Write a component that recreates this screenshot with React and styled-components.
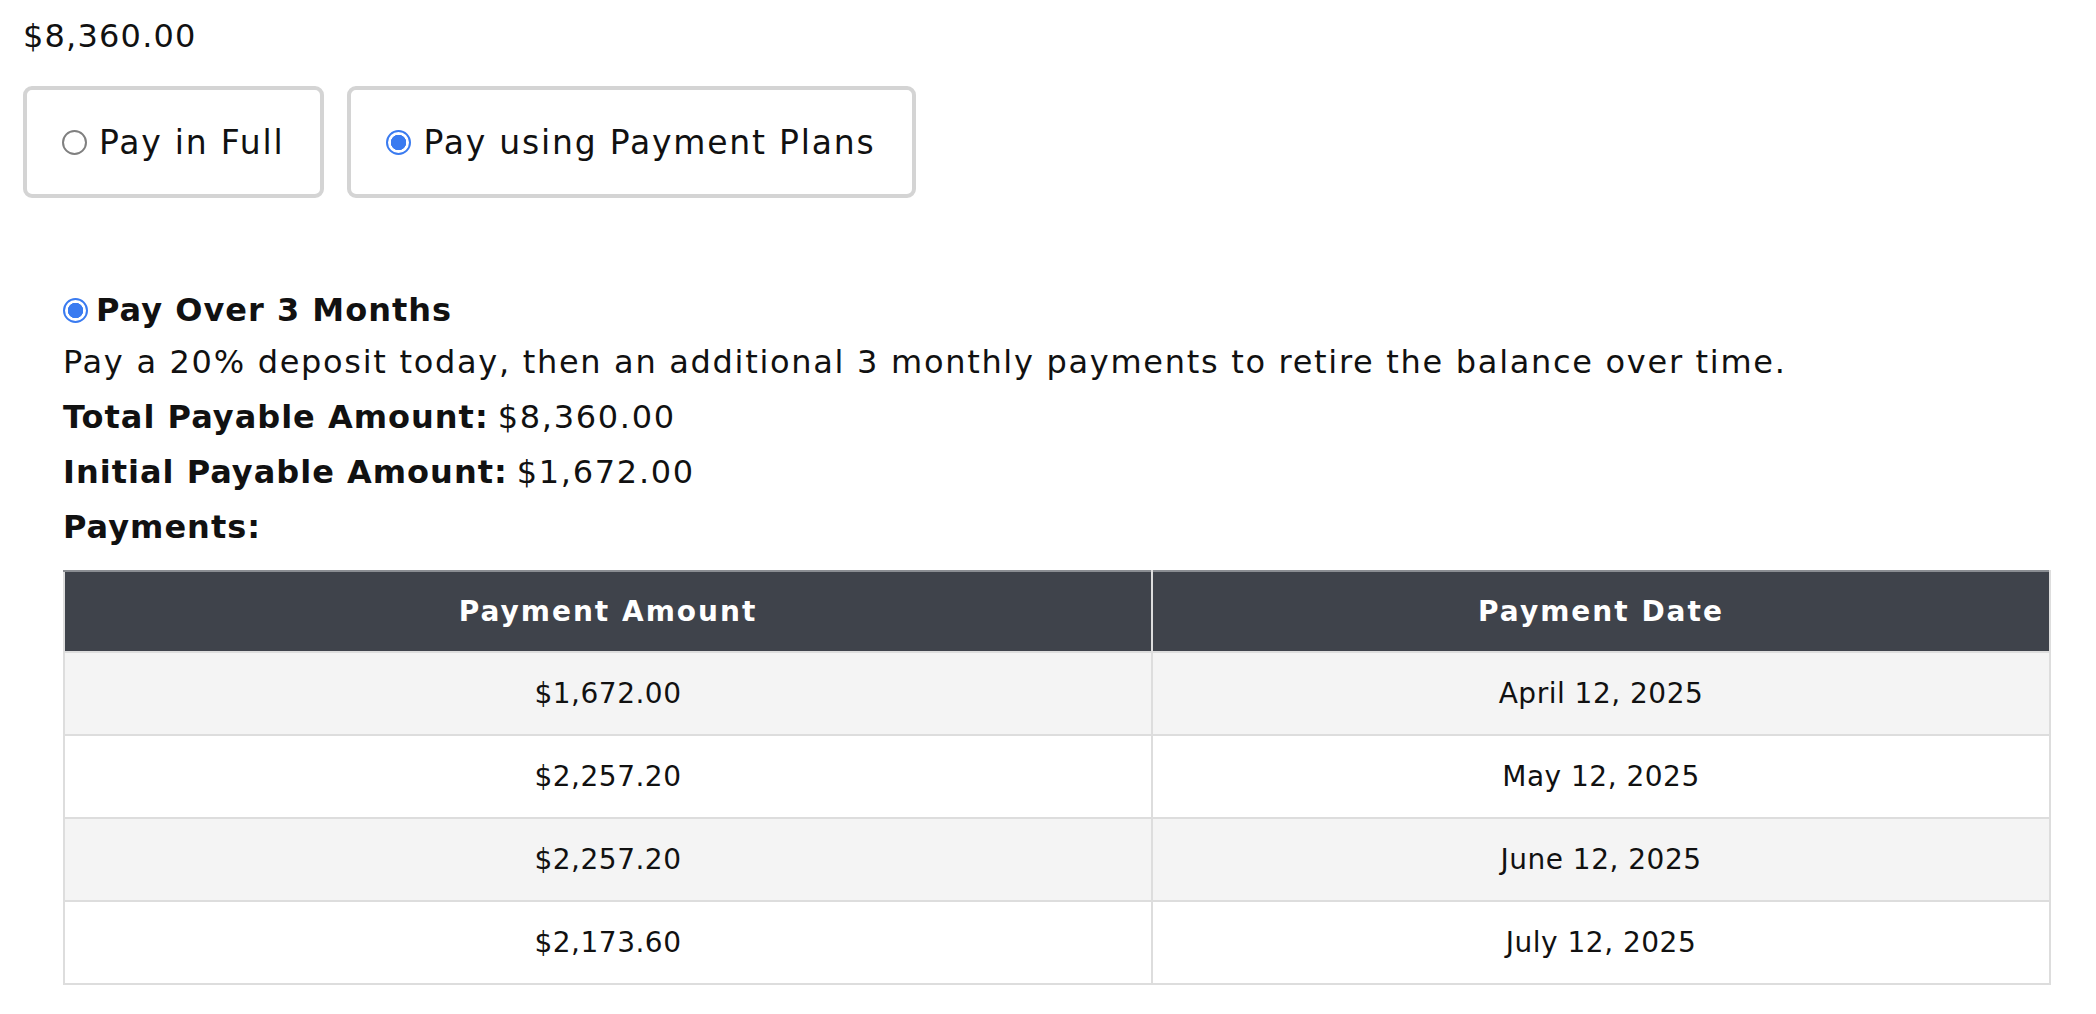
import React, { useState } from 'react'
import styled, { createGlobalStyle } from 'styled-components'

const GlobalStyle = createGlobalStyle`
  html, body {
    margin: 0;
    padding: 0;
    background: #ffffff;
  }
  body {
    font-family: "DejaVu Sans", "Open Sans", "Liberation Sans", sans-serif;
    color: #111111;
  }
`

const Page = styled.div`
  padding: 12px 45px 20px 23px;
`

const Price = styled.div`
  font-size: 32px;
  line-height: 48px;
  letter-spacing: 1.2px;
`

const Options = styled.div`
  display: flex;
  gap: 23px;
  margin-top: 26px;
`

const OptionBox = styled.label`
  display: flex;
  align-items: center;
  height: 112px;
  box-sizing: border-box;
  padding: 0 36px 0 35px;
  border: 4px solid #d4d4d4;
  border-radius: 9px;
  font-size: 33px;
  letter-spacing: 1.8px;
  cursor: pointer;
`

const Radio = styled.span`
  flex: none;
  width: 25px;
  height: 25px;
  box-sizing: border-box;
  border-radius: 50%;
  margin-right: ${p => p.$gap || 12}px;
  border: 2px solid ${p => (p.$checked ? '#3a7bf0' : '#808080')};
  background: ${p => (p.$checked ? 'radial-gradient(circle, #3a7bf0 0 7.5px, #ffffff 8px)' : '#ffffff')};
`

const Plan = styled.div`
  margin: 87px 0 0 40px;
`

const PlanTitle = styled.div`
  display: flex;
  align-items: center;
  font-size: 32px;
  font-weight: 700;
  line-height: 50px;
  letter-spacing: 1px;
`

const Line = styled.div`
  font-size: 32px;
  line-height: 55px;
  letter-spacing: 1.7px;
`

const Label = styled.span`
  font-weight: 700;
  letter-spacing: 1px;
  margin-right: 9px;
`

const Table = styled.table`
  width: 100%;
  margin-top: 15px;
  border-collapse: collapse;
  table-layout: fixed;
  font-size: 28px;
  letter-spacing: 0.5px;
`

const Head = styled.th`
  height: 79px;
  padding: 0;
  background: #3f434b;
  color: #ffffff;
  font-weight: 700;
  letter-spacing: 2px;
  text-align: center;
  border: 2px solid #dddddd;
  border-top-color: #8a8d92;
`

const Cell = styled.td`
  height: 81px;
  padding: 0;
  text-align: center;
  border: 2px solid #dddddd;
  background: ${p => (p.$odd ? '#f4f4f4' : '#ffffff')};
`

const payments = [
  { amount: '$1,672.00', date: 'April 12, 2025' },
  { amount: '$2,257.20', date: 'May 12, 2025' },
  { amount: '$2,257.20', date: 'June 12, 2025' },
  { amount: '$2,173.60', date: 'July 12, 2025' },
]

export default function App() {
  const [mode, setMode] = useState('plans')

  return (
    <Page>
      <GlobalStyle />
      <Price>$8,360.00</Price>

      <Options>
        <OptionBox onClick={() => setMode('full')}>
          <Radio $checked={mode === 'full'} />
          Pay in Full
        </OptionBox>
        <OptionBox onClick={() => setMode('plans')}>
          <Radio $checked={mode === 'plans'} />
          Pay using Payment Plans
        </OptionBox>
      </Options>

      {mode === 'plans' && (
        <Plan>
          <PlanTitle>
            <Radio $checked $gap={8} />
            Pay Over 3 Months
          </PlanTitle>
          <Line>Pay a 20% deposit today, then an additional 3 monthly payments to retire the balance over time.</Line>
          <Line><Label>Total Payable Amount:</Label>$8,360.00</Line>
          <Line><Label>Initial Payable Amount:</Label>$1,672.00</Line>
          <Line><Label>Payments:</Label></Line>

          <Table>
            <colgroup>
              <col style={{ width: '1088px' }} />
              <col />
            </colgroup>
            <thead>
              <tr>
                <Head>Payment Amount</Head>
                <Head>Payment Date</Head>
              </tr>
            </thead>
            <tbody>
              {payments.map((p, i) => (
                <tr key={i}>
                  <Cell $odd={i % 2 === 0}>{p.amount}</Cell>
                  <Cell $odd={i % 2 === 0}>{p.date}</Cell>
                </tr>
              ))}
            </tbody>
          </Table>
        </Plan>
      )}
    </Page>
  )
}
